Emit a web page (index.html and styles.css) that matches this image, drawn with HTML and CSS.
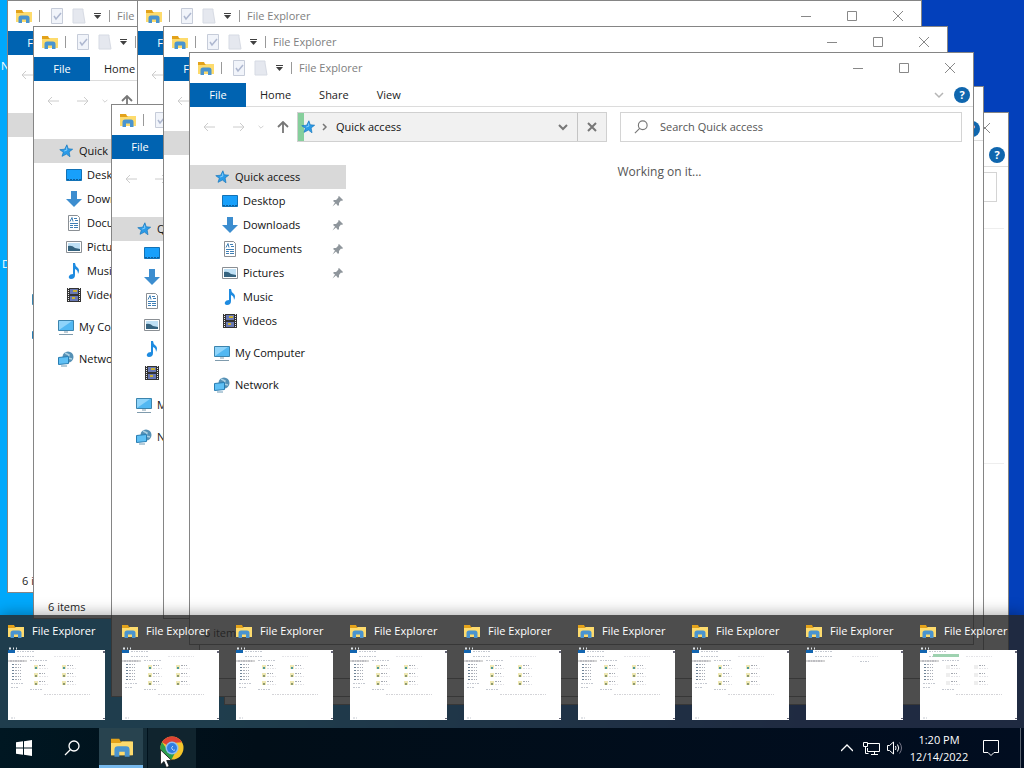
FILE: index.html
```
<!DOCTYPE html>
<html lang="en">
<head>
    <meta charset="UTF-8">
    <meta name="viewport" content="width=device-width, initial-scale=1.0">
    <title>Desktop</title>
    <link rel="stylesheet" href="styles.css">
</head>
<body>
    <!-- Icon set -->
    <svg class="sprite" aria-hidden="true">
        <symbol id="folder" viewBox="0 0 16 14">
            <path d="M0 1h6l1 2h8v10H0z" fill="#e3a21a"/>
            <path d="M0 4h7l1-1h8v10H0z" fill="#fddb6d"/>
            <path d="M2.500 14V9q0-2.500 2.500-2.500h6q2.500 0 2.500 2.500v5h-3.500v-3.500H6V14z" fill="#4a94cf"/>
        </symbol>
        <symbol id="doc-check" viewBox="0 0 14 16">
            <path d="M1.500.5h11v15h-11z" fill="#eef2fa" stroke="#b9c0d0"/>
            <path d="M4 8l2 3 5-6" fill="none" stroke="#9aa6c4" stroke-width="1.500"/>
        </symbol>
        <symbol id="doc-new" viewBox="0 0 14 16">
            <path d="M1 1h10v2l2 12H1z" fill="#dfe3ec" stroke="#cdd2dd"/>
        </symbol>
        <symbol id="star" viewBox="-1 -1 18 18">
            <path d="M9 1l1.500 4.500L15.500 6l-4 3 1 5.500L8.500 11.500 3.500 14l1.500-4.500L1 6.500l5.500-.5z" fill="#2b9be8" stroke="#1878bd" stroke-width=".8"/>
            <path d="M8.500 4l.5 3-3 1" fill="none" stroke="#8fd3ff"/>
        </symbol>
        <symbol id="desktop" viewBox="0 0 16 16">
            <path d="M.5 2.500h15v11H.5z" fill="#18a0fb" stroke="#1272b6"/>
            <path d="M1 12.500h14" stroke="#0d5f9d" stroke-dasharray="2 1"/>
        </symbol>
        <symbol id="downloads" viewBox="0 0 16 16">
            <path d="M5 0h6v8h5l-8 8-8-8h5z" fill="#3c8dcf"/>
        </symbol>
        <symbol id="documents" viewBox="0 0 16 16">
            <path d="M2.500.5h9l2 2v13h-11z" fill="#fff" stroke="#8a8f94"/>
            <path d="M4 8.500h8M4 10.500h3M8 10.500h4M4 12.500h3M8 12.500h4M8 3.500h3M9 5.500h3" stroke="#3f7fb5"/>
            <path d="M4 6.500l2-4 1 4" fill="none" stroke="#3f7fb5"/>
        </symbol>
        <symbol id="pictures" viewBox="0 0 16 16">
            <path d="M.5 2.500h15v11H.5z" fill="#fff" stroke="#8a8f94"/>
            <path d="M2 4h12v8H2z" fill="#bfe0f5"/>
            <path d="M2 7q4-1 7 2l5 1v2H2z" fill="#35637f"/>
        </symbol>
        <symbol id="music" viewBox="0 0 16 16">
            <path d="M7 0h2q0 3 3 5 2 2 0 6 0-4-3-5v6q0 4-4 4-3-.5-2-3 1-2 4-2z" fill="#1e8be0"/>
        </symbol>
        <symbol id="videos" viewBox="0 0 16 16">
            <path d="M1 1h14v14H1z" fill="#333"/>
            <path d="M2.500 1v14M13.500 1v14" stroke="#eee" stroke-dasharray="1 1"/>
            <path d="M4 2h8v5H4zM4 9h8v5H4z" fill="#6878b4"/>
            <path d="M7 3h4v2H7zM6 10h3v2H6z" fill="#c9b034"/>
        </symbol>
        <symbol id="computer" viewBox="0 0 16 16">
            <path d="M.5 1.500h15v10H.5z" fill="#52b8f2" stroke="#3c84ad"/>
            <path d="M1 11L14 2H1z" fill="#8fd4fa"/>
            <path d="M6 13h4M1 15.500h14" stroke="#7f9bad"/>
        </symbol>
        <symbol id="network" viewBox="0 0 16 16">
            <circle cx="10" cy="6" r="5.500" fill="#5590b5"/>
            <path d="M7 2l4 2-1 3 4 1" fill="none" stroke="#a9cfe2" stroke-width="1.500"/>
            <path d="M.5 6.500l10-1v7l-10 1z" fill="#5fc0f5" stroke="#287db2"/>
            <path d="M3 15h6" stroke="#6c99b4"/>
        </symbol>
        <symbol id="pin" viewBox="0 0 12 12">
            <path d="M7 1l4 4-1 1-1-.5L7 8v2L6 11 4 8.500.5 11.500 3 7.500 1 6l1-1h2l2.500-2.500L6 2z" fill="#8f969c"/>
        </symbol>
        <symbol id="back" viewBox="0 0 12 10">
            <path d="M12 5H1M5 1L1 5l4 4" fill="none" stroke="currentColor"/>
        </symbol>
        <symbol id="forward" viewBox="0 0 12 10">
            <path d="M0 5h11M7 1l4 4-4 4" fill="none" stroke="currentColor"/>
        </symbol>
        <symbol id="up" viewBox="0 0 12 12">
            <path d="M6 12V1M1 6l5-5 5 5" fill="none" stroke="currentColor" stroke-width="1.800"/>
        </symbol>
        <symbol id="chevron" viewBox="0 0 10 10">
            <path d="M1 3l4 4 4-4" fill="none" stroke="currentColor" stroke-width="1.500"/>
        </symbol>
        <symbol id="chevron-bold" viewBox="0 0 10 10">
            <path d="M1 3l4 4 4-4" fill="none" stroke="currentColor" stroke-width="2"/>
        </symbol>
        <symbol id="chevron-right" viewBox="0 0 6 8">
            <path d="M1 1l3 3-3 3" fill="none" stroke="currentColor" stroke-width="1.500"/>
        </symbol>
        <symbol id="stop" viewBox="0 0 10 10">
            <path d="M1 1l8 8M9 1L1 9" fill="none" stroke="currentColor" stroke-width="2"/>
        </symbol>
        <symbol id="caret" viewBox="0 0 7 6">
            <path d="M0 .5h7" stroke="#111"/>
            <path d="M0 2h7L3.500 6z" fill="#111"/>
        </symbol>
        <symbol id="minimize" viewBox="0 0 10 10"><path d="M0 5.500h10" stroke="#888"/></symbol>
        <symbol id="maximize" viewBox="0 0 10 10"><path d="M.5.5h9v9h-9z" fill="none" stroke="#888"/></symbol>
        <symbol id="close" viewBox="0 0 10 10"><path d="M0 0l10 10M10 0L0 10" stroke="#888"/></symbol>
        <symbol id="search" viewBox="0 0 16 16">
            <circle cx="10" cy="6" r="5" fill="none" stroke="currentColor" stroke-width="1.300"/>
            <path d="M6.500 9.500L1 15" stroke="currentColor" stroke-width="1.300"/>
        </symbol>
    </svg>

    <main class="desktop">
        <span class="shortcut shortcut-n">N</span>
        <span class="shortcut shortcut-d">D</span>
        <div id="windows"></div>
    </main>

    <section class="previews" id="previews" aria-label="Open windows"></section>

    <footer class="taskbar">
        <button class="task" aria-label="Start">
            <svg width="16" height="16" viewBox="0 0 16 16"><path d="M0 2.300L7 1.300V7.600H0zM8 1.200L16 0v7.600H8zM0 8.400h7v6.300L0 13.700zM8 8.400h8V16l-8-1.200z" fill="#fff"/></svg>
        </button>
        <button class="task" aria-label="Search">
            <svg class="white" width="16" height="16"><use href="#search"/></svg>
        </button>
        <button class="task active" aria-label="File Explorer">
            <svg width="22" height="20"><use href="#folder"/></svg>
        </button>
        <button class="task hover" aria-label="Google Chrome">
            <svg width="24" height="24" viewBox="0 0 24 24">
                <circle cx="12" cy="12" r="11.500" fill="#f5c52b"/>
                <path d="M12 12L2 6.200A11.500 11.500 0 0 1 22 6.200L12 7z" fill="#de4334"/>
                <path d="M2 6.200A11.500 11.500 0 0 0 11.500 23.500L16 15 7.500 14z" fill="#2c9d4d"/>
                <circle cx="12" cy="12" r="6.500" fill="#8fbdf0"/>
                <circle cx="12" cy="12" r="5" fill="#2f7de0"/>
                <path d="M13 10a2 2 0 1 0 2 4" fill="none" stroke="#b9d4f5"/>
            </svg>
        </button>
        <div class="tray">
            <button class="tray-btn" aria-label="Show hidden icons">
                <svg width="12" height="8" viewBox="0 0 12 8"><path d="M0 7l6-6 6 6" fill="none" stroke="#fff" stroke-width="1.300"/></svg>
            </button>
            <button class="tray-btn" aria-label="Network">
                <svg width="17" height="15" viewBox="0 0 17 15"><path d="M5 2.500h11.500v8H4.500V7M8 13.500h7M11.500 11v2M.5 1.500h4v4h-4zM2.500 6v6.500h3" fill="none" stroke="#fff"/></svg>
            </button>
            <button class="tray-btn" aria-label="Volume">
                <svg width="16" height="14" viewBox="0 0 16 14"><path d="M.5 4.500h2l4-3.500v12l-4-3.500h-2zM8.500 5q1 2 0 4M10.500 3.500q2.500 3.500 0 7" fill="none" stroke="#fff"/><path d="M12.500 1.500q4 5.500 0 11" fill="none" stroke="#778"/></svg>
            </button>
            <button class="clock"><span>1:20 PM</span><span>12/14/2022</span></button>
            <button class="notice" aria-label="Notifications">
                <svg width="16" height="16" viewBox="0 0 16 16"><path d="M.5.500h15v12H11l-3 3-3-3H.500z" fill="none" stroke="#fff"/></svg>
            </button>
        </div>
    </footer>

    <svg class="pointer" width="13" height="20" viewBox="0 0 13 20" aria-hidden="true">
        <path d="M.5.800v15l3.500-3.300 2.500 6 2.700-1.200-2.500-5.800h5z" fill="#fff" stroke="#111" stroke-width=".8"/>
    </svg>

    <script src="script.js"></script>
</body>
</html>
```
FILE: styles.css
```
* {
    box-sizing: border-box;
}

body {
    display: flex;
    flex-direction: column;
    justify-content: flex-end;
    position: relative;
    min-height: 100vh;
    margin: 0;
    overflow: hidden;
    background: linear-gradient(100deg, #00a8fb 0%, #00a8fb 30%, #0340bb 80%);
    color: #111;
    font-family: "Open Sans", "Noto Sans", sans-serif;
    font-size: 11px;
    line-height: 16px;
}

button {
    display: flex;
    align-items: center;
    justify-content: center;
    margin: 0;
    padding: 0;
    border: none;
    background: none;
    color: inherit;
    font: inherit;
}

svg {
    flex: none;
}

.sprite {
    position: absolute;
    width: 0;
    height: 0;
}

.desktop {
    position: absolute;
    inset: 0;
    overflow: hidden;
}

.shortcut {
    position: absolute;
    color: #fff;
}

.shortcut-n { left: 1px; top: 58px; }
.shortcut-d { left: 2px; top: 256px; }

/* Explorer windows */
.window {
    position: absolute;
    display: flex;
    flex-direction: column;
    width: 785px;
    height: 593px;
    border: 1px solid #858585;
    background: #fff;
}

.w1 { left: 7px; top: 0; }
.w2 { left: 33px; top: 26px; }
.w3 { left: 137px; top: 0; }
.w4 { left: 111px; top: 104px; }
.w5 { left: 224px; top: 112px; }
.w6 { left: 199px; top: 86px; }
.w7 { left: 163px; top: 26px; }
.w8 { left: 189px; top: 52px; }

.titlebar {
    display: flex;
    align-items: center;
    height: 30px;
    padding-left: 8px;
    color: #808080;
}

.sep {
    width: 1px;
    height: 12px;
    background: #999;
}

.quick {
    display: flex;
    align-items: center;
    gap: 8px;
    margin: 0 8px 0 10px;
}

.quick svg {
    opacity: .8;
}

.titlebar > .sep {
    margin-left: 7px;
}

.quick + .sep {
    margin-left: 0;
}

.caption {
    margin-left: 7px;
}

.controls {
    display: flex;
    margin-left: auto;
}

.controls button {
    width: 46px;
    height: 30px;
}

.ribbon {
    display: flex;
    align-items: center;
    height: 24px;
    border-bottom: 1px solid #dcdcdc;
    padding-right: 3px;
    color: #222;
}

.ribbon button {
    height: 24px;
    padding: 0 14px;
}

.ribbon .file {
    width: 56px;
    background: #0063b1;
    color: #fff;
}

.ribbon .expand {
    margin-left: auto;
    padding: 0 10px;
    color: #b5b5b5;
}

.ribbon .help {
    width: 16px;
    height: 16px;
    padding: 0;
    border-radius: 50%;
    background: #0f66ae;
    color: #fff;
    font-weight: bold;
}

.location {
    display: flex;
    align-items: center;
    height: 40px;
    padding: 0 11px 0 13px;
    color: #777;
}

.arrows {
    display: flex;
    align-items: center;
    width: 94px;
    gap: 18px;
}

.arrows svg:nth-child(-n+3) {
    color: #ccc;
}

.arrows svg:nth-child(3) {
    margin-right: -5px;
    margin-left: -5px;
}

.address {
    display: flex;
    flex: 1;
    align-items: center;
    height: 30px;
    margin-right: 13px;
    border: 1px solid #d0d0d0;
    background: #f1f1f1;
    color: #111;
}

.address.loading {
    background: linear-gradient(90deg, #86cf9c 6px, #f1f1f1 6px);
}

.address svg {
    color: #777;
}

.address .star {
    margin-left: 2px;
}

.address .chevron-right {
    margin: 0 8px 0 6px;
}

.address button {
    width: 29px;
    height: 28px;
}

.address button:nth-of-type(1) {
    margin-left: auto;
}

.address button:nth-of-type(2) {
    border-left: 1px solid #c4c4c4;
}

.searchbox {
    display: flex;
    align-items: center;
    gap: 12px;
    width: 342px;
    height: 30px;
    padding-left: 13px;
    border: 1px solid #d4d4d4;
}

.searchbox input {
    flex: 1;
    min-width: 0;
    padding: 0;
    border: none;
    outline: none;
    background: none;
    font: inherit;
}

.searchbox input::placeholder {
    color: #555;
    opacity: 1;
}

.body {
    display: flex;
    flex: 1;
    padding-top: 18px;
}

.tight .body {
    padding-top: 10px;
}

.nav {
    width: 156px;
}

.nav a {
    display: flex;
    align-items: center;
    gap: 5px;
    height: 24px;
    padding: 0 2px 0 24px;
    color: #111;
    text-decoration: none;
}

.nav .child {
    padding-left: 32px;
}

.nav .selected {
    background: #d9d9d9;
}

.nav .root {
    margin-top: 8px;
}

.nav .pin {
    margin-left: auto;
}

.content {
    flex: 1;
    margin-top: -1px;
    color: #555;
    font-size: 12px;
    text-align: center;
}

.content.split {
    margin: 3px 4px 0 0;
    border: solid #eee;
    border-width: 1px 0;
    height: 236px;
}

.status {
    height: 22px;
    padding: 3px 14px;
    color: #222;
}

/* Strip of window previews */
.previews {
    display: flex;
    position: relative;
    gap: 17px;
    height: 113px;
    padding: 0 7px 0 8px;
    background: rgba(38, 38, 38, .82);
    box-shadow: 0 -1px 14px rgba(0, 0, 0, .35);
}

.preview {
    flex: 1 1 0;
    flex-direction: column;
    align-items: flex-start;
    justify-content: flex-start;
    min-width: 0;
    color: #fff;
    text-align: left;
}

.preview-title {
    display: flex;
    align-items: center;
    gap: 8px;
    height: 32px;
    white-space: nowrap;
}

.thumb {
    width: 100%;
    height: 73px;
}

/* Taskbar */
.taskbar {
    display: flex;
    position: relative;
    height: 40px;
    background: linear-gradient(90deg, #001722, #010e18 25%, #010d20);
    color: #fff;
}

.task {
    width: 48px;
    height: 40px;
}

.task.active {
    width: 44px;
    margin: 0 5px 0 3px;
    padding-left: 2px;
    border-bottom: 3px solid #76b9ed;
    background: #28434f;
    box-shadow: 4px 0 0 #142b36;
}

.task.hover {
    background: #10242e;
}

.white {
    color: #fff;
}

.tray {
    display: flex;
    align-items: center;
    margin-left: auto;
    margin-right: 3px;
    padding-right: 12px;
    border-right: 1px solid #5a6470;
}

.tray-btn {
    width: 24px;
    height: 40px;
}

.clock {
    flex-direction: column;
    width: 64px;
    margin-right: 3px;
    line-height: 17px;
}

.notice {
    width: 34px;
    height: 40px;
}

.pointer {
    position: absolute;
    left: 160px;
    top: 749px;
}
```
FILE: script.js
```
const icon = (name, w, h = w, cls = '') =>
    `<svg class="${cls}" width="${w}" height="${h}" aria-hidden="true"><use href="#${name}"/></svg>`;

const navItems = [
    ['star', 'Quick access', 'selected'],
    ['desktop', 'Desktop', 'child', true],
    ['downloads', 'Downloads', 'child', true],
    ['documents', 'Documents', 'child', true],
    ['pictures', 'Pictures', 'child', true],
    ['music', 'Music', 'child'],
    ['videos', 'Videos', 'child'],
    ['computer', 'My Computer', 'root'],
    ['network', 'Network', 'root']
];

// back to front; parts that other windows cover are left out
const explorers = [
    { cls: 'w5', split: true },
    { cls: 'w1', caption: true, tabs: ['File'], nav: navItems, status: '6 items' },
    { cls: 'w2', tabs: ['File', 'Home'], nav: navItems, status: '6 items' },
    { cls: 'w3', caption: true, tabs: ['File'] },
    { cls: 'w4', tabs: ['File'], nav: navItems },
    { cls: 'w6' },
    { cls: 'w7 tight', caption: true, tabs: ['File'], nav: navItems.slice(0, 1) },
    { cls: 'w8', caption: true, tabs: ['File', 'Home', 'Share', 'View'], nav: navItems, status: '6 items', front: true }
];

function navList(items = []) {
    return items.map(([name, label, cls, pinned]) =>
        `<a href="#" class="${cls}">${icon(name, 16)}<span>${label}</span>${pinned ? icon('pin', 12, 12, 'pin') : ''}</a>`
    ).join('');
}

function locationBar(w) {
    return `
        <div class="location">
            <div class="arrows">${icon('back', 12, 10)}${icon('forward', 12, 10)}${icon('chevron', 6)}${icon('up', 12)}</div>
            <div class="address ${w.front ? 'loading' : ''}">
                ${icon('star', 16, 16, 'star')}${icon('chevron-right', 6, 8, 'chevron-right')}<span>${w.front ? 'Quick access' : ''}</span>
                <button aria-label="Previous locations">${icon('chevron-bold', 10)}</button>
                <button aria-label="Stop">${icon('stop', 10)}</button>
            </div>
            <label class="searchbox">${icon('search', 14)}<input type="text" placeholder="${w.front ? 'Search Quick access' : ''}" aria-label="Search"></label>
        </div>`;
}

function explorer(w) {
    const tabs = (w.tabs || []).map((tab, i) => `<button class="${i ? 'tab' : 'file'}">${tab}</button>`).join('');
    return `
    <article class="window ${w.cls}">
        <header class="titlebar">
            ${icon('folder', 16, 14)}
            <span class="sep"></span>
            <div class="quick">${icon('doc-check', 14, 16)}${icon('doc-new', 14, 16)}${icon('caret', 7, 6)}</div>
            <span class="sep"></span>
            <span class="caption">${w.caption ? 'File Explorer' : ''}</span>
            <div class="controls">
                <button aria-label="Minimize">${icon('minimize', 10)}</button>
                <button aria-label="Maximize">${icon('maximize', 10)}</button>
                <button aria-label="Close">${icon('close', 10)}</button>
            </div>
        </header>
        <div class="ribbon">
            ${tabs}
            <button class="expand" aria-label="Expand the ribbon">${icon('chevron', 10)}</button>
            <button class="help">?</button>
        </div>
        ${locationBar(w)}
        <div class="body">
            <nav class="nav">${navList(w.nav)}</nav>
            <div class="content ${w.split ? 'split' : ''}">${w.front ? 'Working on it...' : ''}</div>
        </div>
        <footer class="status">${w.status || ''}</footer>
    </article>`;
}

// miniature of an explorer window, drawn on a 97x73 grid
function thumb(kind) {
    const line = (x, y, w, color = '#c4c8d0') =>
        `<path d="M${x} ${y}h${w}" stroke="${color}" stroke-dasharray="2 1 1 1"/>`;
    let out = '<path d="M0 3h97v70H0z" fill="#fff"/><path d="M0 3h7v3H0z" fill="#1265b0"/>' +
        '<path d="M1 1.500h2M5 1.500h1M8 1.500h1" stroke="#dfe6ea" stroke-width="2"/>' +
        '<path d="M95 4h2v2h-2zM95 71h2v1h-2z" fill="#667"/>' +
        line(9, 4.5, 18) + line(9, 9.5, 18) + line(46, 9.5, 26, '#e4e4e8');
    if (kind === 'busy') {
        out += '<path d="M13 7h26v3H13z" fill="#9ed2b0"/>';
    }
    out += '<path d="M0 13h19v2H0z" fill="#d6d6d6"/>' + line(2, 14, 14, '#a4a4ae');
    if (kind === 'empty') {
        return out + line(54, 14.5, 10);
    }
    for (let i = 0; i < 6; i++) {
        out += `<path d="M4 ${17.5 + i * 3}h2" stroke="#6d8296"/>` + line(7, 17.5 + i * 3, 6, '#a9adb6');
    }
    out += line(3, 36.5, 12) + line(3, 40.5, 8) + line(22, 13.5, 18) + line(22, 42.5, 12) +
        line(36, 47.5, 46, '#d4d4d8') + line(3, 71, 4);
    for (let row = 0; row < 3; row++) {
        for (let col = 0; col < 2; col++) {
            const x = 26 + col * 28;
            const y = 18 + row * 8;
            const color = kind === 'busy' ? '#eee' : '#efe8b4';
            out += `<path d="M${x} ${y}h4v4h-4z" fill="${color}"/>` +
                (kind === 'busy' ? '' : `<path d="M${x + 1} ${y + 2}h2v2h-2z" fill="${row === 0 ? '#4f9a9a' : '#8d9a70'}"/>`) +
                line(x + 5, y + 0.5, 6, '#a4a8b0') + line(x + 5, y + 3.5, 9, '#e2e2e6');
        }
    }
    return out;
}

const kinds = ['full', 'full', 'full', 'full', 'full', 'full', 'full', 'empty', 'busy'];

document.getElementById('windows').innerHTML = explorers.map(explorer).join('');
document.getElementById('previews').innerHTML = kinds.map(kind => `
    <button class="preview">
        <span class="preview-title">${icon('folder', 16, 14)}File Explorer</span>
        <svg class="thumb" viewBox="0 0 97 73" preserveAspectRatio="none" aria-hidden="true">${thumb(kind)}</svg>
    </button>`).join('');
```
